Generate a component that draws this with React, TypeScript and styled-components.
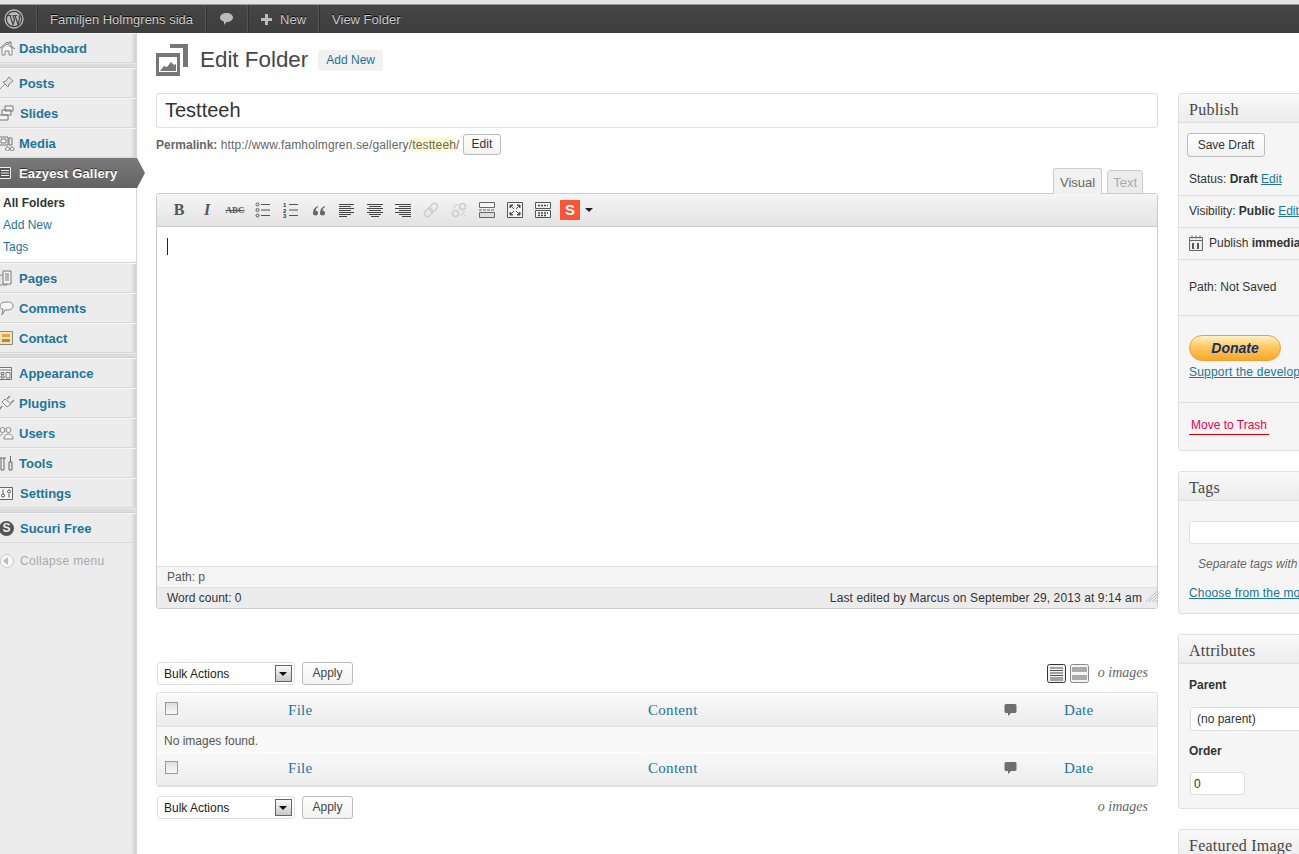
import { FC, ReactNode } from "react";
import styled, { createGlobalStyle } from "styled-components";

const sans = `"Liberation Sans", Arial, sans-serif`;
const serif = `"Liberation Serif", Georgia, serif`;

const GlobalStyle = createGlobalStyle`
  html, body {
    margin: 0;
    padding: 0;
    width: 1299px;
    height: 854px;
    overflow: hidden;
    background: #fff;
    font-family: ${sans};
    font-size: 12px;
    color: #333;
  }
  * { box-sizing: border-box; }
  a { color: #21759b; }
`;

const Svg: FC<{ w?: number; h?: number; children: ReactNode }> = ({ w = 16, h = 16, children }) => (
    <svg width={w} height={h} viewBox={`0 0 ${w} ${h}`} fill="none" style={{ display: "block", flexShrink: 0 }}>
        {children}
    </svg>
);

const menuIcons: Record<string, ReactNode> = {
    home: <Svg><path d="M0 9 8 2l2 2V2h2v4l4 3" stroke="#777" /><path d="M3 8v7h3v-4h4v4h3V8L8 4z" fill="#f6f6f6" stroke="#888" /></Svg>,
    pin: <Svg><path d="M0 15 6 9" stroke="#999" /><path d="M4 7l5 5 1-3 4-3-4-4-3 4z" fill="#e4e4e4" stroke="#888" /></Svg>,
    slides: <Svg><path d="M6 1h8v5H6zM3 5h9v5H3zM0 10h9v5H0z" fill="#f4f4f4" stroke="#777" /></Svg>,
    media: <Svg><path d="M0 2h9v8H0z" fill="#f4f4f4" stroke="#777" /><path d="M2 4h5v4H2zM10 3h3v7h-3zM6.500 14a2 2 0 1 0 0-.1M11 14a2 2 0 1 0 0-.1" stroke="#777" /></Svg>,
    folder: <Svg><path d="M0 2.500h11.500v11H0z" fill="#555" stroke="#eee" /><path d="M2 5.500h8M2 8h8M2 10.500h8" stroke="#eee" /></Svg>,
    pages: <Svg><path d="M0 5h8v10H0z" fill="#e4e4e4" stroke="#888" /><path d="M4 1h8v13H4z" fill="#f4f4f4" stroke="#777" /><path d="M6 4h4M6 6h4M6 8h4M6 10h4" stroke="#777" /></Svg>,
    comments: <Svg><path d="M1 6c0-3 3-4 7-4s6 1 6 4-3 4-6 4H6l-3 5 1-6C2 9 1 8 1 6z" fill="#f6f6f6" stroke="#888" /></Svg>,
    contact: <Svg><path d="M.5 1.500h13v13H.5z" fill="#eaeaa8" stroke="#888" /><path d="M3 4h8v3H3z" fill="#e8a04c" /><path d="M3 9h8v3H3z" fill="#e0705a" /></Svg>,
    appearance: <Svg><path d="M-.5 2.500h13v12h-13z" fill="#f6f6f6" stroke="#777" /><path d="M0 5h12M2 7.500h3v2H2zM2 11h3v2H2zM7 7.500h4v5.500H7z" stroke="#777" /></Svg>,
    plugins: <Svg><path d="M0 15 3 11M8 4l3-3M12 8l3-3" stroke="#888" strokeWidth="1.500" /><path d="M3 7l5 5 4-3-6-5z" fill="#f0f0f0" stroke="#888" /></Svg>,
    users: <Svg><circle cx="3.500" cy="5" r="2.500" fill="#f4f4f4" stroke="#888" /><circle cx="9.500" cy="5" r="2.500" fill="#f4f4f4" stroke="#888" /><path d="M0 14c0-3 2-5 4-5M5 14c0-3 2-5 4.500-5s4.500 2 4.500 5z" fill="#f4f4f4" stroke="#888" /></Svg>,
    tools: <Svg><path d="M0 3h7M2 3v12h3V3M11.500 1v6" stroke="#666" /><path d="M10 7h3v8h-3z" fill="#e4e4e4" stroke="#666" /></Svg>,
    settings: <Svg><path d="M.5 2.500h13v12H.5z" fill="#f6f6f6" stroke="#666" /><path d="M4 4.500v4M10 9v3.500" stroke="#555" /><circle cx="4" cy="10.500" r="1.500" stroke="#555" /><circle cx="10" cy="6.500" r="1.500" stroke="#555" /></Svg>,
};

type MenuEntry = { label: string; icon: string; nudge?: boolean };

const firstGroup: MenuEntry[] = [{ label: "Dashboard", icon: "home" }];
const secondGroup: MenuEntry[] = [
    { label: "Posts", icon: "pin" },
    { label: "Slides", icon: "slides", nudge: true },
    { label: "Media", icon: "media" },
];
const thirdGroup: MenuEntry[] = [
    { label: "Pages", icon: "pages" },
    { label: "Comments", icon: "comments" },
    { label: "Contact", icon: "contact" },
];
const fourthGroup: MenuEntry[] = [
    { label: "Appearance", icon: "appearance" },
    { label: "Plugins", icon: "plugins" },
    { label: "Users", icon: "users" },
    { label: "Tools", icon: "tools" },
    { label: "Settings", icon: "settings", nudge: true },
];

const MenuRow: FC<MenuEntry> = ({ label, icon, nudge }) => (
    <SMenuItem>
        <SMenuIcon>{menuIcons[icon]}</SMenuIcon>
        <SMenuLabel $nudge={nudge}>{label}</SMenuLabel>
    </SMenuItem>
);

const ToolbarButtons: FC = () => (
    <>
        <SToolButton><SBold>B</SBold></SToolButton>
        <SToolButton><SItalic>I</SItalic></SToolButton>
        <SToolButton><SStrike>ABC</SStrike></SToolButton>
        <SToolButton><Svg><path d="M6 2.500h9M6 8h9M6 13.500h9" stroke="#555" /><circle cx="2.500" cy="2.500" r="1.500" stroke="#555" /><circle cx="2.500" cy="8" r="1.500" stroke="#555" /><circle cx="2.500" cy="13.500" r="1.500" stroke="#555" /></Svg></SToolButton>
        <SToolButton><Svg><path d="M6 2.500h9M6 8h9M6 13.500h9" stroke="#555" /><SListDigit x="0" y="5">1</SListDigit><SListDigit x="0" y="10.500">2</SListDigit><SListDigit x="0" y="16">3</SListDigit></Svg></SToolButton>
        <SToolButton><Svg w={14} h={12}><path d="M1 9a2.500 2.500 0 1 0 2.500-2.500C3.500 5 4.500 4 6 3V2C3 3 1 5.500 1 9zM8 9a2.500 2.500 0 1 0 2.500-2.500c0-1.500 1-2.500 2.500-3.500V2C10 3 8 5.500 8 9z" fill="#666" /></Svg></SToolButton>
        <SToolButton><Svg h={13}><path d="M0 .5h15M0 2.500h12M0 4.500h15M0 6.500h12M0 8.500h15M0 10.500h12M0 12.500h8" stroke="#444" /></Svg></SToolButton>
        <SToolButton><Svg h={13}><path d="M0 .5h16M2 2.500h12M0 4.500h16M2 6.500h12M0 8.500h16M2 10.500h12M4 12.500h8" stroke="#444" /></Svg></SToolButton>
        <SToolButton><Svg h={13}><path d="M0 .5h16M4 2.500h12M0 4.500h16M4 6.500h12M0 8.500h16M4 10.500h12M7 12.500h9" stroke="#444" /></Svg></SToolButton>
        <SToolButton><Svg><g transform="rotate(-45 8 8)" stroke="#ccc" strokeWidth="1.500"><rect x="0" y="5" width="9" height="6" rx="3" /><rect x="7" y="5" width="9" height="6" rx="3" /></g></Svg></SToolButton>
        <SToolButton><Svg><circle cx="4.500" cy="11.500" r="3" stroke="#ccc" strokeWidth="1.500" /><circle cx="11.500" cy="4.500" r="3" stroke="#ccc" strokeWidth="1.500" /><path d="M2 2l3 3M14 14l-3-3M2 6h2M6 2v2M10 14v-2M14 10h-2" stroke="#ccc" /></Svg></SToolButton>
        <SToolButton><Svg><path d="M.5.500h15v5H.5z" fill="#f4f4f4" stroke="#666" /><path d="M.5 10.500h15v5H.5z" fill="#ddd" stroke="#666" /><path d="M0 8h16" stroke="#666" strokeDasharray="3 1" /></Svg></SToolButton>
        <SToolButton><Svg><path d="M.5.500h15v15H.5z" fill="#f4f4f4" stroke="#555" /><path d="M3 3h3L3 6zM13 3h-3l3 3zM3 13h3l-3-3zM13 13h-3l3-3zM5 5l2 2M11 5 9 7M5 11l2-2M11 11 9 9" fill="#555" stroke="#555" /></Svg></SToolButton>
        <SToolButton><Svg><path d="M.5.500h15v6H.5zM.5 8.500h15v7H.5z" fill="#f4f4f4" stroke="#555" /><path d="M3 3.500h10M3 11h10M3 13.500h8" stroke="#444" strokeDasharray="2 1" strokeWidth="1.500" /></Svg></SToolButton>
    </>
);

const TableRow: FC<{ head?: boolean }> = ({ head }) => (
    <SHeadRow $head={head}>
        <SCheckCell $head={head}><SCheck /></SCheckCell>
        <SColLabel>File</SColLabel>
        <SColLabel>Content</SColLabel>
        <SColComment>
            <Svg w={13} h={14}><path d="M2 1h9a1.500 1.500 0 0 1 1.500 1.500v6A1.500 1.500 0 0 1 11 10H7l-3 3v-3H2A1.500 1.500 0 0 1 .5 8.500v-6A1.500 1.500 0 0 1 2 1z" fill="#6f6f6f" /></Svg>
        </SColComment>
        <SColLabel>Date</SColLabel>
    </SHeadRow>
);

const BulkBar: FC<{ views?: boolean }> = ({ views }) => (
    <SBulkBar>
        <SFakeSelect>
            Bulk Actions
            <SSelectArrow />
        </SFakeSelect>
        <SApply>Apply</SApply>
        <SBulkRight>
            {views && (
                <SViews>
                    <Svg w={19} h={19}><rect x=".5" y=".5" width="18" height="18" rx="2" fill="#f0f0f0" stroke="#333" /><path d="M3 4h13M3 6.500h13M3 9h13M3 11.500h13M3 14h13M3 16h13" stroke="#555" /></Svg>
                    <Svg w={19} h={19}><rect x=".5" y=".5" width="18" height="18" rx="2" fill="#f4f4f4" stroke="#888" /><path d="M2 3h15v5H2zM2 11h15v5H2z" fill="#aaa" /></Svg>
                </SViews>
            )}
            <SCount>o images</SCount>
        </SBulkRight>
    </SBulkBar>
);

export default function App() {
    return (
        <SPage>
            <GlobalStyle />
            <STopStrip />
            <SAdminBar>
                <SBarLogo>
                    <svg width="20" height="20" viewBox="0 0 20 20" fill="none">
                        <circle cx="10" cy="10" r="9" stroke="#bbb" strokeWidth="1.300" />
                        <circle cx="10" cy="10" r="7" fill="#bbb" />
                        <path d="M4 6.500h3.500M6 6.500l3 9 1.500-4.500L9 6.500M9 6.500h4M11 6.500l3 9 1.500-6c.4-1.500-.2-2.500-1-3" stroke="#464646" strokeWidth="1.200" />
                    </svg>
                </SBarLogo>
                <SBarItem>Familjen Holmgrens sida</SBarItem>
                <SBarIcon>
                    <svg width="15" height="14" viewBox="0 0 15 14"><path d="M7.500 1C11 1 14 2.800 14 5.500S11 10 7.500 10L5 13V9.700C2.600 9 1 7.500 1 5.500 1 2.800 4 1 7.500 1z" fill="#bbb" /></svg>
                </SBarIcon>
                <SBarNew>
                    <svg width="11" height="11" viewBox="0 0 11 11"><path d="M4 0h3v4h4v3H7v4H4V7H0V4h4z" fill="#bbb" /></svg>
                    New
                </SBarNew>
                <SBarLast>View Folder</SBarLast>
            </SAdminBar>
            <SBody>
                <SSidebar>
                    <SGroup>{firstGroup.map((m) => <MenuRow key={m.label} {...m} />)}</SGroup>
                    <SSeparator />
                    <SGroup>
                        {secondGroup.map((m) => <MenuRow key={m.label} {...m} />)}
                        <SActiveItem>
                            <SMenuIcon>{menuIcons.folder}</SMenuIcon>
                            <SActiveLabel>Eazyest Gallery</SActiveLabel>
                            <SActiveArrow />
                        </SActiveItem>
                        <SSubMenu>
                            <SSubCurrent>All Folders</SSubCurrent>
                            <SSubLink>Add New</SSubLink>
                            <SSubLink>Tags</SSubLink>
                        </SSubMenu>
                        {thirdGroup.map((m) => <MenuRow key={m.label} {...m} />)}
                    </SGroup>
                    <SSeparator />
                    <SGroup>{fourthGroup.map((m) => <MenuRow key={m.label} {...m} />)}</SGroup>
                    <SSeparator />
                    <SMenuItem>
                        <SSucuriBadge>S</SSucuriBadge>
                        <SMenuLabel $nudge>Sucuri Free</SMenuLabel>
                    </SMenuItem>
                    <SCollapse>
                        <SCollapseIcon />
                        Collapse menu
                    </SCollapse>
                </SSidebar>
                <SMain>
                    <SLeftColumn>
                        <SHeading>
                            <svg width="32" height="32" viewBox="0 0 32 32">
                                <path d="M14 0h18v23h-5V4H14z" fill="#777" />
                                <path d="M0 9h24v23H0z" fill="#777" />
                                <path d="M3 13h18v15H3z" fill="#fff" />
                                <path d="M4 27l4-5 3 1 4-5 3 3 2-1v7z" fill="#777" />
                            </svg>
                            <STitle>Edit Folder</STitle>
                            <SAddNew>Add New</SAddNew>
                        </SHeading>
                        <STitleInput defaultValue="Testteeh" />
                        <SPermalink>
                            <b>Permalink:</b>&nbsp;<SUrl>http://www.famholmgren.se/gallery/<SSlug>testteeh</SSlug>/</SUrl>
                            <SSmallButton>Edit</SSmallButton>
                        </SPermalink>
                        <STabs>
                            <STab $active>Visual</STab>
                            <STab>Text</STab>
                        </STabs>
                        <SEditor>
                            <SToolbar>
                                <ToolbarButtons />
                                <SSumo>S</SSumo>
                                <SSumoArrow />
                            </SToolbar>
                            <SContent><SCaret /></SContent>
                            <SPathRow>Path: p</SPathRow>
                            <SWordRow>
                                <span>Word count: 0</span>
                                <SLastEdited>Last edited by Marcus on September 29, 2013 at 9:14 am</SLastEdited>
                                <SGrip>
                                    <svg width="11" height="11" viewBox="0 0 11 11"><path d="M11 0 0 11M11 3 3 11M11 6 6 11M11 9 9 11" stroke="#bbb" /></svg>
                                </SGrip>
                            </SWordRow>
                        </SEditor>
                        <SListing>
                            <BulkBar views />
                            <STable>
                                <TableRow head />
                                <SEmptyRow>No images found.</SEmptyRow>
                                <TableRow />
                            </STable>
                            <BulkBar />
                        </SListing>
                    </SLeftColumn>
                    <SRightColumn>
                        <SBox>
                            <SBoxTitle>Publish</SBoxTitle>
                            <SSaveRow><SDraftButton>Save Draft</SDraftButton></SSaveRow>
                            <SFirstStatus $height={33}>Status: <b>Draft</b> <a href="#edit">Edit</a></SFirstStatus>
                            <SDividerRow $height={32}>Visibility: <b>Public</b> <a href="#edit">Edit</a></SDividerRow>
                            <SDividerRow $height={32}>
                                <SCalendar width="14" height="16" viewBox="0 0 14 16"><path d="M.5 2.500h13v13H.5z" fill="#eee" stroke="#666" /><path d="M.5 5.500h13" stroke="#666" /><path d="M3 .5v3M7 .5v3M11 .5v3" stroke="#666" /><path d="M4 8v6M9 8v6" stroke="#555" strokeWidth="2" /></SCalendar>
                                Publish <b>immediately</b>
                            </SDividerRow>
                            <SDividerRow $height={56}>Path: Not Saved</SDividerRow>
                            <SDonateRow>
                                <SDonate>Donate</SDonate>
                                <SSupport href="#support">Support the developer</SSupport>
                            </SDonateRow>
                            <STrashRow><STrash>Move to Trash</STrash></STrashRow>
                        </SBox>
                        <SBox>
                            <SBoxTitle>Tags</SBoxTitle>
                            <STagsBody>
                                <STagInput />
                                <SHint>Separate tags with commas</SHint>
                                <SChoose href="#tags">Choose from the most used tags</SChoose>
                            </STagsBody>
                        </SBox>
                        <SBox>
                            <SBoxTitle>Attributes</SBoxTitle>
                            <SAttributes>
                                <SAttrLabel>Parent</SAttrLabel>
                                <SParentSelect>(no parent)</SParentSelect>
                                <SAttrLabel>Order</SAttrLabel>
                                <SOrderInput defaultValue="0" />
                            </SAttributes>
                        </SBox>
                        <SBox>
                            <SBoxTitle>Featured Image</SBoxTitle>
                        </SBox>
                    </SRightColumn>
                </SMain>
            </SBody>
        </SPage>
    );
}

const SPage = styled.div`
  width: 1299px;
  height: 854px;
  overflow: hidden;
  display: flex;
  flex-direction: column;
`;

const STopStrip = styled.div`
  height: 5px;
  flex-shrink: 0;
  background: #e4e4e4;
  border-bottom: 1px solid #999;
`;

const SAdminBar = styled.div`
  display: flex;
  height: 28px;
  flex-shrink: 0;
  background: linear-gradient(#464646, #3e3e3e);
  color: #ccc;
  font-size: 13px;
  text-shadow: 0 -1px 0 #000;
`;

const SBarItem = styled.div`
  display: flex;
  align-items: center;
  padding: 0 12px 0 13px;
  border-right: 1px solid #555;
  box-shadow: 1px 0 0 #333;
`;

const SBarLogo = styled(SBarItem)`
  width: 37px;
  padding: 0 0 0 4px;
`;

const SBarIcon = styled(SBarItem)`
  width: 42px;
  padding: 0 0 0 13px;
`;

const SBarNew = styled(SBarItem)`
  width: 71px;
  gap: 8px;
  padding: 0 0 0 13px;
`;

const SBarLast = styled(SBarItem)`
  border: 0;
  box-shadow: none;
`;

const SBody = styled.div`
  display: flex;
  flex: 1;
  min-height: 0;
`;

const SSidebar = styled.nav`
  width: 137px;
  flex-shrink: 0;
  background: #ececec;
  box-shadow: inset -6px 0 6px -6px rgba(0, 0, 0, 0.25);
  border-right: 1px solid #d8d8d8;
`;

const SGroup = styled.div`
  display: flex;
  flex-direction: column;
`;

const SSeparator = styled.div`
  height: 5px;
  background: #dcdcdc;
  border-top: 1px solid #e8e8e8;
  border-bottom: 1px solid #cfcfcf;
`;

const SMenuItem = styled.div`
  display: flex;
  align-items: center;
  height: 30px;
  border-top: 1px solid #f6f6f6;
  border-bottom: 1px solid #d8d8d8;
`;

const SMenuIcon = styled.span`
  width: 19px;
  display: flex;
  flex-shrink: 0;
  margin-left: -1px;
`;

const SMenuLabel = styled.span<{ $nudge?: boolean }>`
  font-size: 13px;
  font-weight: bold;
  color: #21759b;
  margin-left: ${(p) => (p.$nudge ? "2px" : "1px")};
`;

const SActiveItem = styled.div`
  position: relative;
  display: flex;
  align-items: center;
  height: 30px;
  margin-right: -1px;
  background: linear-gradient(#7a7a7a, #636363);
`;

const SActiveLabel = styled.span`
  margin-left: 1px;
  font-size: 13px;
  font-weight: bold;
  letter-spacing: 0.15px;
  color: #fff;
  text-shadow: 0 -1px 0 #333;
`;

const SActiveArrow = styled.span`
  position: absolute;
  left: 100%;
  top: 0;
  width: 8px;
  height: 30px;
  background: linear-gradient(#7a7a7a, #636363);
  clip-path: polygon(0 0, 100% 50%, 0 100%);
`;

const SSubMenu = styled.div`
  display: flex;
  flex-direction: column;
  height: 75px;
  padding: 4px 0 0 3px;
  background: #fff;
  border-bottom: 1px solid #d8d8d8;
  border-radius: 0 0 3px 0;
  font-size: 12px;
`;

const SSubLink = styled.div`
  height: 22px;
  line-height: 22px;
  color: #21759b;
`;

const SSubCurrent = styled(SSubLink)`
  color: #333;
  font-weight: bold;
`;

const SSucuriBadge = styled.span`
  width: 15px;
  height: 15px;
  margin: 0 4px 0 -1px;
  border-radius: 50%;
  background: #555;
  color: #eee;
  font-size: 12px;
  font-weight: bold;
  line-height: 15px;
  text-align: center;
  flex-shrink: 0;
`;

const SCollapse = styled.div`
  display: flex;
  align-items: center;
  gap: 6px;
  height: 35px;
  font-size: 12px;
  letter-spacing: 0.35px;
  color: #aaa;
`;

const SCollapseIcon = styled.span`
  width: 14px;
  height: 14px;
  border-radius: 50%;
  background: #f6f6f6;
  border: 1px solid #ccc;
  flex-shrink: 0;
  &::before {
    content: "";
    display: block;
    margin: 2px 0 0 2px;
    width: 0;
    border-style: solid;
    border-width: 4px 5px 4px 0;
    border-color: transparent #bbb transparent transparent;
  }
`;

const SMain = styled.main`
  display: flex;
  gap: 20px;
  padding: 11px 0 0 19px;
  flex: 1;
  min-width: 0;
  overflow: hidden;
`;

const SLeftColumn = styled.div`
  width: 1002px;
  flex-shrink: 0;
  display: flex;
  flex-direction: column;
`;

const SRightColumn = styled.div`
  width: 281px;
  flex-shrink: 0;
  display: flex;
  flex-direction: column;
  gap: 20px;
  padding-top: 49px;
`;

const SHeading = styled.div`
  display: flex;
  align-items: center;
  height: 32px;
`;

const STitle = styled.h2`
  margin: 0 0 0 12px;
  font-size: 22.4px;
  font-weight: normal;
  color: #464646;
`;

const SAddNew = styled.span`
  margin: 0 0 0 10px;
  padding: 0 8px;
  height: 21px;
  line-height: 21px;
  background: #f1f1f1;
  border-radius: 3px;
  color: #21759b;
  font-size: 12px;
`;

const STitleInput = styled.input`
  margin-top: 17px;
  height: 35px;
  width: 100%;
  padding: 0 8px;
  background: #fff;
  border: 1px solid #dfdfdf;
  border-radius: 3px;
  outline: none;
  font-family: ${sans};
  font-size: 20px;
  color: #333;
`;

const SPermalink = styled.div`
  display: flex;
  align-items: center;
  height: 21px;
  margin-top: 6px;
  font-size: 12px;
  color: #666;
  white-space: pre;
`;

const SUrl = styled.span`
  letter-spacing: 0.14px;
`;

const SSlug = styled.span`
  background: #fffbcc;
`;

const SSmallButton = styled.span`
  margin-left: 3px;
  height: 21px;
  line-height: 19px;
  padding: 0 8px;
  background: linear-gradient(#fff, #f2f2f2);
  border: 1px solid #bbb;
  border-radius: 3px;
  color: #333;
`;

const STabs = styled.div`
  display: flex;
  justify-content: flex-end;
  align-items: flex-end;
  gap: 5px;
  height: 25px;
  margin-top: 14px;
  padding-right: 15px;
  margin-bottom: -1px;
  z-index: 1;
`;

const STab = styled.div<{ $active?: boolean }>`
  height: ${(p) => (p.$active ? 26 : 24)}px;
  line-height: ${(p) => (p.$active ? 27 : 24)}px;
  padding: 0 ${(p) => (p.$active ? 6 : 5)}px;
  font-size: 13px;
  background: ${(p) => (p.$active ? "#f1f1f1" : "#ececec")};
  color: ${(p) => (p.$active ? "#666" : "#aaa")};
  border: 1px solid #ccc;
  border-bottom: ${(p) => (p.$active ? "0" : "1px solid #ccc")};
  border-radius: 3px 3px 0 0;
`;

const SEditor = styled.div`
  height: 416px;
  flex-shrink: 0;
  display: flex;
  flex-direction: column;
  border: 1px solid #ccc;
  border-radius: 3px;
  overflow: hidden;
`;

const SToolbar = styled.div`
  display: flex;
  align-items: center;
  height: 33px;
  flex-shrink: 0;
  padding-left: 8px;
  background: linear-gradient(#f5f5f5, #e3e3e3);
  border-bottom: 1px solid #ccc;
`;

const SToolButton = styled.span`
  display: flex;
  align-items: center;
  justify-content: center;
  width: 28px;
  height: 28px;
`;

const SBold = styled.span`
  font-family: ${serif};
  font-weight: bold;
  font-size: 16px;
  color: #555;
`;

const SItalic = styled(SBold)`
  font-style: italic;
`;

const SStrike = styled.span`
  font-family: ${serif};
  font-weight: bold;
  font-size: 9px;
  color: #555;
  text-decoration: line-through;
`;

const SListDigit = styled.text`
  font-family: ${sans};
  font-size: 6px;
  font-weight: bold;
  fill: #333;
`;

const SSumo = styled.span`
  width: 20px;
  height: 20px;
  margin-left: 3px;
  background: #fb5537;
  color: #fff;
  font-size: 15px;
  font-weight: bold;
  line-height: 20px;
  text-align: center;
`;

const SSumoArrow = styled.span`
  margin-left: 5px;
  border-style: solid;
  border-width: 4px 4px 0;
  border-color: #222 transparent transparent;
`;

const SContent = styled.div`
  flex: 1;
  background: #fff;
  padding: 11px 10px;
`;

const SCaret = styled.div`
  width: 1px;
  height: 17px;
  background: #222;
`;

const SPathRow = styled.div`
  height: 21px;
  line-height: 21px;
  padding-left: 10px;
  background: #f5f5f5;
  border-top: 1px solid #dfdfdf;
  color: #555;
`;

const SWordRow = styled.div`
  position: relative;
  display: flex;
  justify-content: space-between;
  height: 21px;
  line-height: 21px;
  padding: 0 15px 0 10px;
  background: #ececec;
  border-top: 1px solid #dfdfdf;
  color: #333;
`;

const SLastEdited = styled.span`
  letter-spacing: 0.11px;
`;

const SGrip = styled.span`
  position: absolute;
  right: 0;
  bottom: -1px;
`;

const SListing = styled.div`
  margin-top: 52px;
  display: flex;
  flex-direction: column;
  gap: 7px;
`;

const SBulkBar = styled.div`
  display: flex;
  align-items: center;
  gap: 7px;
  height: 24px;
  padding-left: 1px;
`;

const SFakeSelect = styled.div`
  position: relative;
  width: 138px;
  height: 23px;
  line-height: 22px;
  padding-left: 6px;
  background: #fff;
  border: 1px solid #dfdfdf;
  border-radius: 3px;
  color: #222;
`;

const SSelectArrow = styled.span`
  position: absolute;
  right: 2px;
  top: 2px;
  width: 17px;
  height: 17px;
  border: 1px solid #666;
  background: linear-gradient(#fafafa, #c8c8c8);
  &::after {
    content: "";
    position: absolute;
    left: 3px;
    top: 6px;
    border-style: solid;
    border-width: 4px 4px 0;
    border-color: #111 transparent transparent;
  }
`;

const SApply = styled.span`
  width: 51px;
  height: 23px;
  line-height: 21px;
  text-align: center;
  background: linear-gradient(#fff, #f2f2f2);
  border: 1px solid #bbb;
  border-radius: 3px;
  color: #444;
`;

const SBulkRight = styled.div`
  margin-left: auto;
  display: flex;
  align-items: center;
  gap: 9px;
  padding-right: 10px;
`;

const SViews = styled.div`
  display: flex;
  gap: 4px;
`;

const SCount = styled.span`
  font-family: ${serif};
  font-style: italic;
  font-size: 14px;
  color: #666;
`;

const STable = styled.div`
  margin-bottom: 1px;
  border: 1px solid #dfdfdf;
  border-radius: 3px;
  background: #f9f9f9;
  overflow: hidden;
`;

const SHeadRow = styled.div<{ $head?: boolean }>`
  display: grid;
  grid-template-columns: 131px 360px 356px 60px 1fr;
  align-items: center;
  height: 34px;
  padding-top: ${(p) => (p.$head ? 2 : 0)}px;
  background: linear-gradient(#f9f9f9, #ececec);
  border-top: 1px solid #fff;
  border-bottom: 1px solid #dfdfdf;
  font-family: ${serif};
  font-size: 15px;
  letter-spacing: 0.3px;
  color: #21759b;
`;

const SCheckCell = styled.div<{ $head?: boolean }>`
  padding: 0 0 ${(p) => (p.$head ? 6 : 4)}px 8px;
`;

const SCheck = styled.span`
  display: block;
  width: 13px;
  height: 13px;
  border: 1px solid #999;
  background: linear-gradient(#ddd, #fafafa);
`;

const SColLabel = styled.span`
  padding-bottom: 2px;
`;

const SColComment = styled.span`
  padding-bottom: 2px;
`;

const SEmptyRow = styled.div`
  height: 25px;
  line-height: 29px;
  padding-left: 7px;
  color: #555;
`;

const SBox = styled.section`
  flex-shrink: 0;
  background: #f5f5f5;
  border: 1px solid #dfdfdf;
  border-radius: 3px;
  overflow: hidden;
`;

const SBoxTitle = styled.h3`
  margin: 0;
  height: 29px;
  line-height: 31px;
  padding-left: 10px;
  background: linear-gradient(#f9f9f9, #ececec);
  border-bottom: 1px solid #dfdfdf;
  font-family: ${serif};
  font-size: 16px;
  letter-spacing: 0.25px;
  font-weight: normal;
  color: #464646;
`;

const SSaveRow = styled.div`
  padding: 10px 0 0 8px;
  height: 39px;
`;

const SDraftButton = styled.span`
  display: block;
  width: 78px;
  height: 24px;
  line-height: 23px;
  text-align: center;
  background: linear-gradient(#fff, #f2f2f2);
  border: 1px solid #bbb;
  border-radius: 3px;
  color: #333;
`;

const SStatusRow = styled.div<{ $height: number }>`
  height: ${(p) => p.$height}px;
  line-height: ${(p) => p.$height - 2}px;
  padding-left: 10px;
  white-space: pre;
  color: #333;
`;

const SFirstStatus = styled(SStatusRow)`
  line-height: ${(p) => p.$height + 2}px;
`;

const SDividerRow = styled(SStatusRow)`
  border-top: 1px solid #dfdfdf;
`;

const SCalendar = styled.svg`
  vertical-align: -4px;
  margin-right: 6px;
`;

const SDonateRow = styled.div`
  height: 87px;
  padding: 19px 0 0 10px;
  border-top: 1px solid #dfdfdf;
`;

const SDonate = styled.div`
  width: 92px;
  height: 26px;
  margin-bottom: 4px;
  border: 1px solid #f0a030;
  border-radius: 13px;
  background: linear-gradient(#fff2c8, #ffc860 45%, #f9a82a);
  color: #12306b;
  font-size: 14px;
  font-weight: bold;
  font-style: italic;
  line-height: 24px;
  text-align: center;
`;

const SSupport = styled.a`
  letter-spacing: 0.2px;
  white-space: nowrap;
`;

const SChoose = styled.a`
  letter-spacing: 0.15px;
  white-space: nowrap;
`;

const STrashRow = styled.div`
  height: 48px;
  padding: 15px 0 0 10px;
  border-top: 1px solid #dfdfdf;
`;

const STrash = styled.span`
  display: inline-block;
  width: 80px;
  height: 17px;
  padding-left: 2px;
  color: #f00050;
  border-bottom: 1px solid #d00;
  line-height: 15px;
`;

const STagsBody = styled.div`
  height: 112px;
  padding: 20px 0 0 10px;
  display: flex;
  flex-direction: column;
`;

const STagInput = styled.input`
  width: 240px;
  height: 23px;
  flex-shrink: 0;
  background: #fff;
  border: 1px solid #dfdfdf;
  border-radius: 3px;
  outline: none;
`;

const SHint = styled.em`
  margin: 13px 0 15px 9px;
  color: #666;
  white-space: nowrap;
`;

const SAttributes = styled.div`
  height: 144px;
  padding: 14px 0 0 10px;
  display: flex;
  flex-direction: column;
`;

const SAttrLabel = styled.div`
  font-weight: bold;
  color: #333;
`;

const SParentSelect = styled.div`
  width: 220px;
  height: 24px;
  line-height: 22px;
  margin: 15px 0 13px 1px;
  padding-left: 6px;
  background: #fff;
  border: 1px solid #dfdfdf;
  border-radius: 3px;
  color: #333;
`;

const SOrderInput = styled.input`
  width: 55px;
  height: 23px;
  margin: 14px 0 0 1px;
  padding: 0 3px;
  background: #fff;
  border: 1px solid #dfdfdf;
  border-radius: 3px;
  outline: none;
  font-family: ${sans};
  font-size: 12px;
  color: #333;
`;
